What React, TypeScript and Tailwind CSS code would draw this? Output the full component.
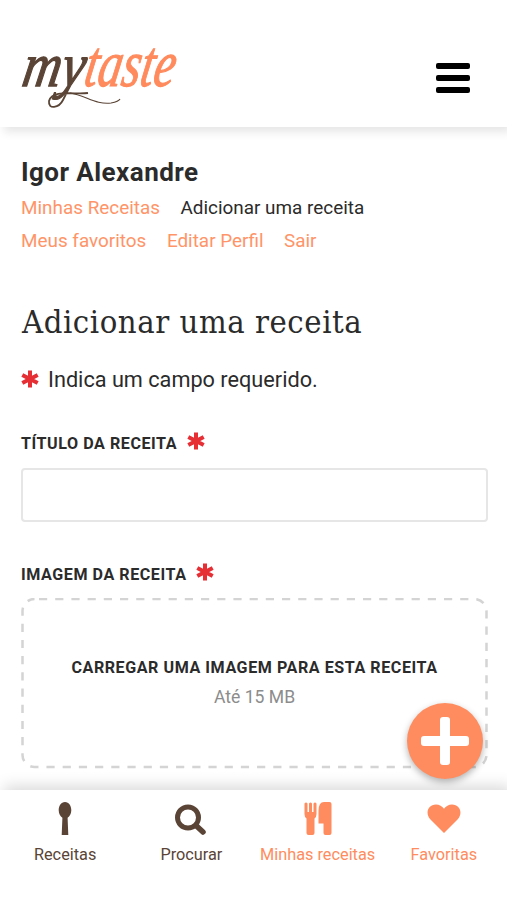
import type { ReactNode } from 'react';

function Required({ className = '' }: { className?: string }) {
  return (
    <svg
      viewBox="0 0 18 18"
      className={`h-[18px] w-[18px] shrink-0 text-[#e62e35] ${className}`}
      stroke="currentColor"
      strokeWidth="4"
    >
      <path d="M9 .5v17M1.300 4.900l15.400 8.200M1.300 13.100l15.400-8.200" />
    </svg>
  );
}

function Logo() {
  return (
    <svg viewBox="-10 -22 190 110" className="h-[110px] w-[190px] overflow-visible">
      <g transform="translate(8 0) skewX(-10)">
        <text
          x="0"
          y="42"
          textLength="62"
          lengthAdjust="spacingAndGlyphs"
          className="fill-[#5a4436] stroke-[#5a4436] font-['Liberation_Serif',serif] text-[62px] italic"
          strokeWidth="1.300"
        >
          my
        </text>
        <text
          x="62"
          y="42"
          textLength="90"
          lengthAdjust="spacingAndGlyphs"
          className="fill-[#ff8a5c] stroke-[#ff8a5c] font-['Liberation_Serif',serif] text-[66px] italic"
          strokeWidth="1.100"
        >
          taste
        </text>
      </g>
      <path
        d="M68 49C56 51 32 45 29 57c-1 9 10 7 14-1l7-14"
        fill="none"
        stroke="#5a4436"
        strokeWidth="1.8"
      />
      <path d="M50 49c15 2 26 12 41 10 5-1 8-2 9-4" fill="none" stroke="#5a4436" strokeWidth="1.1" />
    </svg>
  );
}

function NavItem({ label, className, children }: { label: string; className: string; children: ReactNode }) {
  return (
    <a className={`flex flex-col items-center ${className}`}>
      <svg viewBox="0 0 36 36" className="h-9 w-9" fill="currentColor">
        {children}
      </svg>
      <span className="mt-[8px] text-[16.3px] leading-5 whitespace-nowrap">{label}</span>
    </a>
  );
}

export default function App() {
  return (
    <div className="flex h-[900px] w-[507px] flex-col overflow-hidden bg-white font-[Roboto,sans-serif] text-[#2b2b2b]">
      <header className="flex h-[127px] shrink-0 items-start justify-between pr-[37px] pl-[10px] shadow-[4px_5px_9px_rgba(0,0,0,0.1)]">
        <div className="h-[110px] pt-[22px]">
          <Logo />
        </div>
        <button className="mt-[63px] flex w-[34px] flex-col gap-[6px]" aria-label="Menu">
          <span className="h-[6px] w-full rounded-[2px] bg-black" />
          <span className="h-[6px] w-full rounded-[2px] bg-black" />
          <span className="h-[6px] w-full rounded-[2px] bg-black" />
        </button>
      </header>

      <main className="flex h-[663px] shrink-0 flex-col px-[21px] pt-[29px]">
        <h2 className="text-[26px] leading-8 font-bold tracking-[0.45px]">Igor Alexandre</h2>
        <nav className="mt-[4px] flex flex-wrap gap-x-[20.500px] text-[18.900px] leading-[32.500px] text-[#ff9468]">
          <a>Minhas Receitas</a>
          <a className="mr-20 text-[#2b2b2b]">Adicionar uma receita</a>
          <a>Meus favoritos</a>
          <a>Editar Perfil</a>
          <a>Sair</a>
        </nav>

        <h1 className="mt-[45px] pl-px font-['Roboto_Slab','DejaVu_Serif_Condensed','DejaVu_Serif',serif] text-[32.500px] leading-10 tracking-[0.550px] whitespace-nowrap">
          Adicionar uma receita
        </h1>
        <p className="mt-[22px] flex items-center gap-[9px] text-[21.700px] leading-8">
          <Required className="-translate-y-px" />
          Indica um campo requerido.
        </p>

        <label className="mt-[36px] flex h-[25px] items-center gap-[10px] text-[16.100px] font-bold tracking-[0.550px]">
          <span>TÍTULO DA RECEITA</span>
          <Required className="-translate-y-[4px]" />
        </label>
        <input className="mt-[11px] h-[54px] w-[467px] shrink-0 rounded-[4px] border-2 border-[#e6e6e6]" />

        <label className="mt-[41px] flex h-[25px] items-center gap-[9px] text-[16.100px] font-bold tracking-[0.550px]">
          <span>IMAGEM DA RECEITA</span>
          <Required className="-translate-y-[4px]" />
        </label>
        <div className="relative mt-[10px] flex h-[171px] w-[467px] shrink-0 flex-col items-center pt-[58px]">
          <svg className="absolute inset-0 h-full w-full" fill="none">
            <rect
              x="1.5"
              y="1"
              width="464"
              height="168"
              rx="12"
              stroke="#d4d4d4"
              strokeWidth="2.5"
              strokeDasharray="8.2 8"
              strokeDashoffset="-4.5"
            />
          </svg>
          <strong className="text-[16.100px] leading-6 tracking-[0.550px] whitespace-nowrap">
            CARREGAR UMA IMAGEM PARA ESTA RECEITA
          </strong>
          <span className="mt-[5px] text-[17.600px] leading-6 text-[#8c8c8c]">Até 15 MB</span>
          <button
            className="absolute top-[105px] left-[386px] z-10 flex h-[76px] w-[76px] items-center justify-center rounded-full bg-[#ff8c5e] shadow-[0_3px_7px_rgba(0,0,0,0.3)]"
            aria-label="Adicionar"
          >
            <svg viewBox="0 0 48 48" className="h-12 w-12 fill-white">
              <rect x="19" width="10" height="48" rx="3" />
              <rect y="19" width="48" height="10" rx="3" />
            </svg>
          </button>
        </div>
      </main>

      <footer className="grid h-[110px] shrink-0 grid-cols-4 bg-white pt-[11px] pl-[2px] shadow-[4px_-4px_14px_rgba(0,0,0,0.15)]">
        <NavItem label="Receitas" className="text-[#5a4436]">
          <path d="M18 1c4 0 6.3 4.200 6.300 8.300 0 3.500-1.600 6-3.700 7.500L21.300 34h-6.600l.7-17.200c-2.100-1.500-3.700-4-3.700-7.500C11.700 5.200 14 1 18 1z" />
        </NavItem>
        <NavItem label="Procurar" className="text-[#5a4436]">
          <circle cx="15" cy="16.500" r="10.500" fill="none" stroke="currentColor" strokeWidth="5" />
          <path d="M23 24.500l7 6.500" stroke="currentColor" strokeWidth="5.500" strokeLinecap="round" />
        </NavItem>
        <NavItem label="Minhas receitas" className="text-[#ff8c5e]">
          <path d="M4.500 2.500q1.500-2 3 0V11h1.500V2.500q1.500-2 3 0V11h1.500V2.500q1.500-2 3 0V13q0 3.500-2 4.500V32q0 2-2 2H8.500q-2 0-2-2V17.500q-2-1-2-4.500z" />
          <path d="M24 1h5.500q2 0 2 2v29q0 2-2 2h-4q-2 0-2-2V22.500h-5V10Q18.500 1 24 1z" />
        </NavItem>
        <NavItem label="Favoritas" className="text-[#ff8c5e]">
          <path d="M18 32L4 18C-1 12 2 3.500 10 3.500c3.500 0 6 1.700 8 4.200 2-2.500 4.500-4.200 8-4.200 8 0 11 8.500 6 14.500z" />
        </NavItem>
      </footer>
    </div>
  );
}
